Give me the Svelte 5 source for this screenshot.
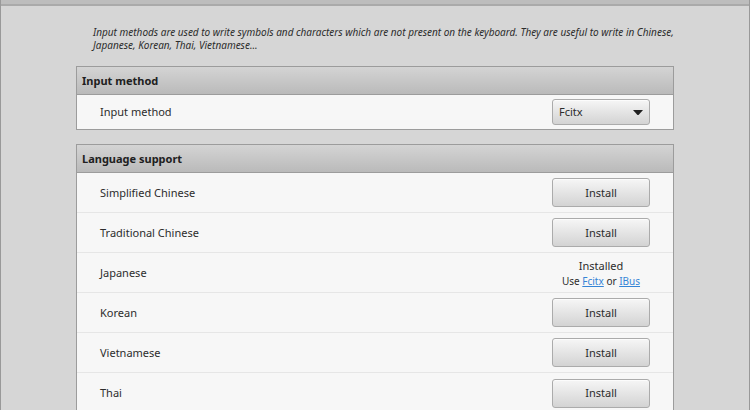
<script>
  let method = $state('Fcitx');
  const languages = [
    { name: 'Simplified Chinese' },
    { name: 'Traditional Chinese' },
    { name: 'Japanese', installed: true },
    { name: 'Korean' },
    { name: 'Vietnamese' },
    { name: 'Thai' }
  ];
</script>

<main class="window">
  <div class="toolbar"></div>
  <div class="content">
    <p class="intro">
      Input methods are used to write symbols and characters which are not present on the keyboard. They are useful to write in Chinese, Japanese, Korean, Thai, Vietnamese...
    </p>

    <section class="panel">
      <h2>Input method</h2>
      <div class="row choice">
        <label for="method">Input method</label>
        <div class="picker">
          <select id="method" class="control" bind:value={method}>
            <option>Fcitx</option>
            <option>IBus</option>
            <option>None</option>
          </select>
          <svg class="arrow" viewBox="0 0 10 5" aria-hidden="true">
            <path d="M0 0H10L6 4.4Q5 5.4 4 4.4Z" fill="#202020" />
          </svg>
        </div>
      </div>
    </section>

    <section class="panel">
      <h2>Language support</h2>
      {#each languages as language}
        <div class="row">
          <span>{language.name}</span>
          {#if language.installed}
            <div class="status">
              <div>Installed</div>
              <div class="hint">Use <a href="#fcitx">Fcitx</a> or <a href="#ibus">IBus</a></div>
            </div>
          {:else}
            <button class="control" type="button" aria-label={`Install ${language.name}`}>Install</button>
          {/if}
        </div>
      {/each}
    </section>
  </div>
</main>

<style>
  :global(body) {
    margin: 0;
    background: #d6d6d6;
  }

  .window {
    box-sizing: border-box;
    min-height: 100vh;
    border: solid #999;
    border-width: 0 1px;
    background: #d6d6d6;
    color: #2c2c2c;
    font: 11px/16px 'Noto Sans', sans-serif;
  }

  .toolbar {
    height: 4px;
    background: #bdbdbd;
    border-bottom: 2px solid #aaa;
  }

  .content {
    padding: 20px 75px 0;
  }

  .intro {
    margin: 0 -8px 14px 17px;
    font-size: 10px;
    line-height: 13px;
    font-style: italic;
  }

  .panel {
    margin-bottom: 14px;
    border: 1px solid #9c9c9c;
    background: #f7f7f7;
  }

  h2 {
    box-sizing: border-box;
    height: 28px;
    margin: 0;
    padding: 0 5px;
    border-bottom: 1px solid #9c9c9c;
    background: linear-gradient(#d4d4d4, #bababa);
    color: #202020;
    font-size: 11px;
    line-height: 27px;
    font-weight: 700;
  }

  .row {
    box-sizing: border-box;
    display: flex;
    align-items: center;
    justify-content: space-between;
    height: 40px;
    padding: 0 23px;
    border-bottom: 1px solid #e6e6e6;
  }

  .row:last-child {
    border-bottom: 0;
  }

  .choice {
    height: 34px;
  }

  .picker {
    position: relative;
    display: flex;
  }

  .control {
    box-sizing: border-box;
    width: 98px;
    height: 29px;
    margin: 0;
    border: 1px solid #ababab;
    border-radius: 3px;
    background: linear-gradient(#f6f6f6, #d3d3d3);
    box-shadow: inset 0 1px #fcfcfc;
    color: inherit;
    font: inherit;
  }

  select.control {
    height: 26px;
    padding: 0 20px 0 6px;
    appearance: none;
  }

  .arrow {
    position: absolute;
    top: 11px;
    right: 7px;
    width: 10px;
    height: 5px;
    pointer-events: none;
  }

  .status {
    width: 98px;
    text-align: center;
    line-height: 16px;
  }

  .hint {
    font-size: 10px;
    line-height: 14px;
  }

  a {
    color: #3584d6;
  }
</style>
